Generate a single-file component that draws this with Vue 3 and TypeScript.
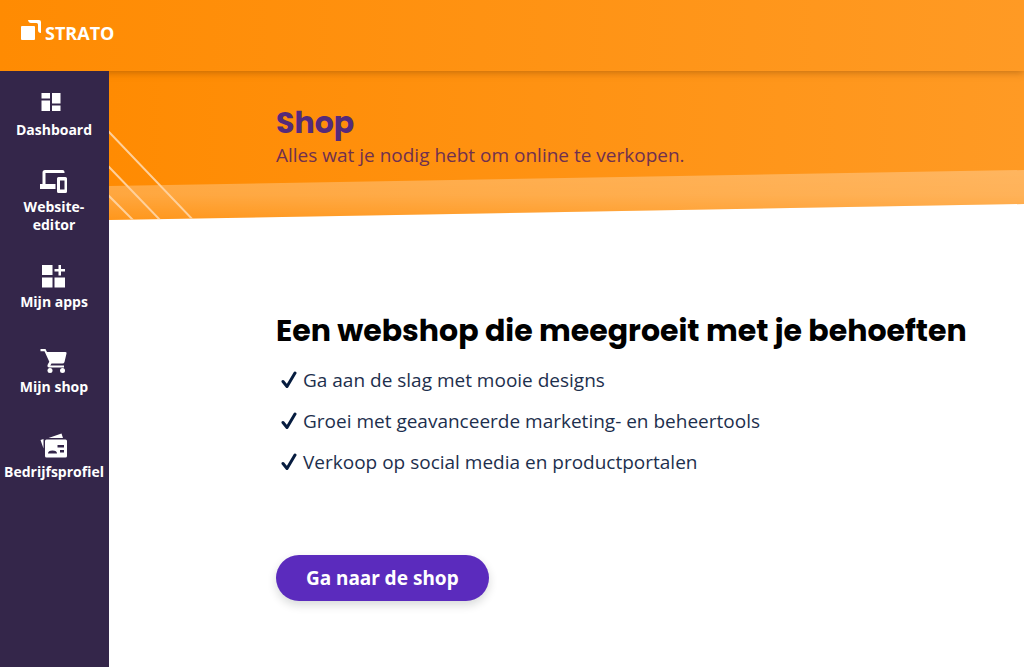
<script setup lang="ts">
type IconName = 'dashboard' | 'editor' | 'apps' | 'cart' | 'profile'

interface NavItem {
  icon: IconName
  label: string
}

const navItems: NavItem[] = [
  { icon: 'dashboard', label: 'Dashboard' },
  { icon: 'editor', label: 'Website-editor' },
  { icon: 'apps', label: 'Mijn apps' },
  { icon: 'cart', label: 'Mijn shop' },
  { icon: 'profile', label: 'Bedrijfsprofiel' },
]

const benefits: string[] = [
  'Ga aan de slag met mooie designs',
  'Groei met geavanceerde marketing- en beheertools',
  'Verkoop op social media en productportalen',
]
</script>

<template>
  <div class="page">
    <header class="topbar">
      <a class="brand" href="#">
        <svg class="brand-mark" viewBox="0 0 20 20" aria-hidden="true">
          <rect x="0" y="6" width="14" height="14" rx="1" />
          <path d="M7 0H18Q20 0 20 2V13Q17 13 17 10V4.500Q17 3 15.500 3H10Q7.500 3 7 0Z" />
        </svg>
        <span class="brand-name">STRATO</span>
      </a>
    </header>

    <div class="body">
      <nav class="sidebar">
        <a v-for="item in navItems" :key="item.icon" class="nav-item" :class="item.icon" href="#">
          <svg v-if="item.icon === 'dashboard'" class="nav-icon" viewBox="0 2 28 24" aria-hidden="true">
            <path d="M4.500 3h8.500v5.500h-8.500zM15 3h8.500v10.500h-8.500zM4.500 10.500h8.500v10.500h-8.500zM15 15.500h8.500V21h-8.500z" />
          </svg>
          <svg v-else-if="item.icon === 'editor'" class="nav-icon" viewBox="0 0 28 24" aria-hidden="true">
            <path d="M8 1H25.500Q27.500 1 27.500 3V4H8.500V15H18.500V20H3V15H5.500V3.500Q5.500 1 8 1Z" />
            <path fill-rule="evenodd" d="M21.500 8h7q1.500 0 1.500 1.500v13q0 1.500-1.500 1.500h-7q-1.500 0-1.500-1.500v-13q0-1.500 1.500-1.500zM23 11.500v9h4.500v-9z" />
          </svg>
          <svg v-else-if="item.icon === 'apps'" class="nav-icon" viewBox="0 0 28 24" aria-hidden="true">
            <path d="M5 1h10.500v10H5zM5 13.500h10.500v10H5zM17.500 13.500H28v10H17.500zM21.500 1H24v4h4v2.500h-4v4h-2.500v-4h-4V5h4z" />
          </svg>
          <svg v-else-if="item.icon === 'cart'" class="nav-icon" viewBox="0 0 28 24" aria-hidden="true">
            <path d="M3.500 0H8.500L10 3H28.500Q30 3 29.500 4.500L27.500 13Q27 14.500 25.500 14.500H14.500L13.300 16.500H27V18.500H12Q9.500 18 11 15L12.300 12.800L7.500 2.300H3.500Z" />
            <circle cx="13" cy="21.500" r="2.500" />
            <circle cx="25.500" cy="21.500" r="2.500" />
          </svg>
          <svg v-else class="nav-icon" viewBox="0 0 28 24" aria-hidden="true">
            <path d="M11.500 4L24.500 -0.500L26 4ZM3.500 6L6.500 5V14.500Z" />
            <path fill-rule="evenodd" d="M9.500 5.500h19q1.500 0 1.500 1.500v15q0 1.500-1.500 1.500h-19Q8 23.500 8 22v-15Q8 5.500 9.500 5.500zM11 19.500h9q0-3-4.500-3t-4.500 3zM20.500 11v2.500H27v-2.500zM23 16v2.500h4v-2.500z" />
          </svg>
          <span>{{ item.label }}</span>
        </a>
      </nav>

      <main class="main">
        <section class="hero">
          <div class="hero-band"></div>
          <svg class="hero-lines" viewBox="0 0 90 149" aria-hidden="true">
            <path d="M-1 60L86 151M-1 95L53 151M-1 124L26 151" />
          </svg>
          <div class="hero-text">
            <h1>Shop</h1>
            <p>Alles wat je nodig hebt om online te verkopen.</p>
          </div>
        </section>

        <section class="content">
          <h2>Een webshop die meegroeit met je behoeften</h2>
          <ul class="benefits">
            <li v-for="benefit in benefits" :key="benefit">
              <svg class="check" viewBox="0 0 16 18" aria-hidden="true">
                <path d="M2 10.500L6 15.500L14 2" />
              </svg>
              <span>{{ benefit }}</span>
            </li>
          </ul>
          <div class="action">
            <button type="button">Ga naar de shop</button>
          </div>
        </section>
      </main>
    </div>
  </div>
</template>

<style>
body {
  margin: 0;
}
</style>

<style scoped>
.page {
  display: flex;
  flex-direction: column;
  min-height: 100vh;
  background: #fff;
  font-family: "Open Sans", "Noto Sans", sans-serif;
}

.topbar {
  position: relative;
  z-index: 1;
  box-sizing: border-box;
  height: 71px;
  padding: 20px;
  background: linear-gradient(90deg, #ff8b02, #ff9a24);
  box-shadow: 0 1px 8px rgba(90, 45, 0, 0.4);
}

.brand {
  display: inline-flex;
  align-items: flex-start;
  gap: 4px;
  color: #fff;
  text-decoration: none;
}

.brand-mark {
  width: 20px;
  height: 20px;
  margin-left: 1px;
  fill: #fff;
}

.brand-name {
  font-size: 18px;
  font-weight: 700;
  line-height: 26px;
}

.body {
  display: flex;
  flex: 1;
}

.sidebar {
  position: relative;
  z-index: 2;
  flex: 0 0 109px;
  display: flex;
  flex-direction: column;
  gap: 30px;
  box-sizing: border-box;
  padding: 21px 1px 0 0;
  background: #34264a;
}

.nav-item {
  display: flex;
  flex-direction: column;
  align-items: center;
  gap: 5px;
  min-height: 55px;
  color: #fff;
  font-size: 14px;
  font-weight: 700;
  line-height: 18px;
  text-align: center;
  text-decoration: none;
}

.nav-item.dashboard {
  min-height: 45px;
}

.nav-item.editor span {
  width: 70px;
}

.nav-icon {
  width: 28px;
  height: 24px;
  margin-right: 6px;
  fill: #fff;
  overflow: visible;
}

.main {
  flex: 1;
  min-width: 0;
}

.hero {
  position: relative;
  box-sizing: border-box;
  height: 149px;
  padding: 32px 24px 0 167px;
  background: linear-gradient(90deg, #ff8b02, #ff9a24);
  clip-path: polygon(0 0, 100% 0, 100% 133px, 0 100%);
}

.hero-band {
  position: absolute;
  inset: 99px 0 0;
  background: linear-gradient(rgba(255, 255, 255, 0.27), rgba(255, 255, 255, 0.24) 50%, rgba(255, 255, 255, 0.1));
  clip-path: polygon(0 16px, 100% 0, 100% 100%, 0 100%);
}

.hero-lines {
  position: absolute;
  top: 0;
  left: 0;
  width: 90px;
  height: 149px;
  fill: none;
  stroke: #ffd09a;
  stroke-width: 2;
}

.hero-text {
  position: relative;
  color: #552a7a;
}

h1,
h2 {
  margin: 0;
  font-family: Poppins, Inter, sans-serif;
  font-size: 30px;
  font-weight: 700;
  line-height: 40px;
}

.hero-text p {
  margin: 0;
  color: #70304f;
  font-size: 19px;
  line-height: 24px;
}

.content {
  padding: 91px 24px 48px 167px;
}

h2 {
  color: #000;
}

.benefits {
  display: flex;
  flex-direction: column;
  gap: 13px;
  margin: 0;
  padding: 15px 0 0 5px;
  list-style: none;
  color: #1d2f4d;
  font-size: 19px;
  line-height: 28px;
}

.benefits li {
  display: flex;
  align-items: center;
  gap: 6px;
}

.check {
  flex: none;
  width: 16px;
  height: 18px;
  fill: none;
  stroke: #061c3f;
  stroke-width: 3;
  stroke-linecap: round;
  stroke-linejoin: round;
}

.action {
  margin-top: 79px;
}

button {
  height: 46px;
  padding: 0 30px;
  border: 0;
  border-radius: 23px;
  background: #5b2bbd;
  box-shadow: 0 4px 10px rgba(0, 20, 20, 0.16);
  color: #fff;
  font-family: "Noto Sans", "Open Sans", sans-serif;
  font-size: 19px;
  font-weight: 700;
}
</style>
